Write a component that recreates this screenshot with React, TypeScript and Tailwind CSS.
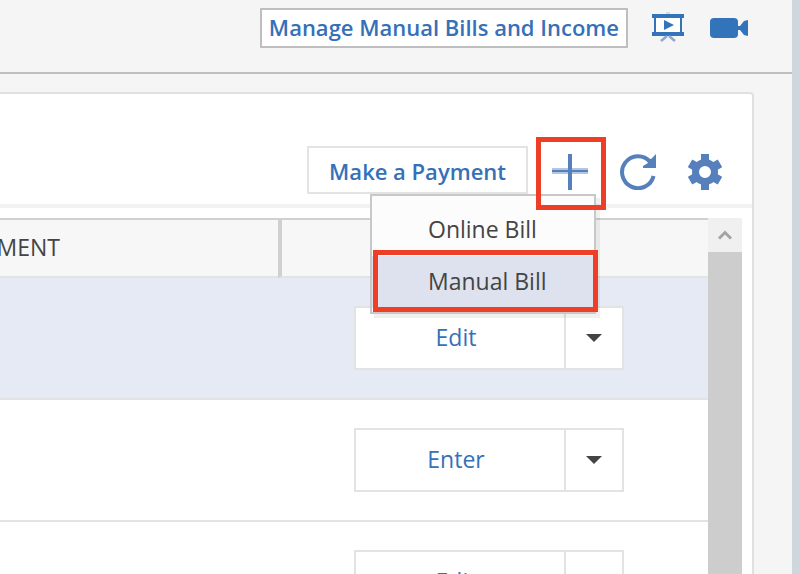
import React from "react";

interface BillRow {
    id: number;
    action: string;
    selected: boolean;
}

const rows: BillRow[] = [
    { id: 1, action: "Edit", selected: true },
    { id: 2, action: "Enter", selected: false },
    { id: 3, action: "Edit", selected: false },
];

function PresentationIcon() {
    return (
        <svg width="32" height="30" viewBox="0 0 32 30" aria-hidden="true">
            <rect x="14" y="0" width="4" height="2" fill="#d5dbe6" />
            <rect x="2" y="4" width="28" height="16" fill="#fff" />
            <path
                d="M0 2h32v4h-2v14h2v4H0v-4h2V6H0zM4 6v14h24V6z"
                fill="#3373ba"
                fillRule="evenodd"
            />
            <path d="M12 8l10 5-10 5z" fill="#3373ba" />
            <path
                d="M15 24l-6 5M17 24l6 5"
                stroke="#8fa6d0"
                strokeWidth="2.5"
                fill="none"
            />
        </svg>
    );
}

function VideoIcon() {
    return (
        <svg width="38" height="20" viewBox="0 0 38 20" aria-hidden="true">
            <rect width="28" height="20" rx="4" fill="#3373ba" />
            <path d="M27 8h3l4-5 4-1v16l-4-1-4-5h-3z" fill="#3373ba" />
        </svg>
    );
}

function PlusIcon() {
    return (
        <svg width="36" height="36" viewBox="0 0 36 36" aria-hidden="true">
            <rect y="14" width="36" height="6" fill="#b3c5e0" />
            <rect y="16" width="36" height="2" fill="#5580bb" />
            <rect x="16" width="4" height="36" fill="#5580bb" />
        </svg>
    );
}

function RefreshIcon() {
    return (
        <svg width="36" height="36" viewBox="0 0 36 36" aria-hidden="true">
            <path
                d="M33.6 22A16 16 0 1 1 30 7.500"
                stroke="#5580bb"
                strokeWidth="4"
                fill="none"
            />
            <path d="M36 0v14H23v-2l5-3-3-5 6 1z" fill="#5580bb" />
        </svg>
    );
}

function GearIcon() {
    return (
        <svg width="34" height="36" viewBox="0 0 34 36" aria-hidden="true">
            <g fill="none" stroke="#5580bb">
                <circle cx="17" cy="18" r="9.500" strokeWidth="7" />
                <path d="M17 0v10M17 26v10" strokeWidth="8" />
                <path
                    d="M2 9.300l8 4.600M24 22.100l8 4.600M2 26.700l8-4.600M24 13.900l8-4.600"
                    strokeWidth="9"
                />
            </g>
        </svg>
    );
}

function SplitButton({ label }: { label: string }) {
    return (
        <div className="flex h-16 border-2 border-[#e3e3e3] bg-white">
            <button
                type="button"
                className="flex-1 pr-2 pb-0.5 text-center text-[23px] text-[#3670b9]"
            >
                {label}
            </button>
            <button
                type="button"
                aria-label={`More options for ${label}`}
                className="flex w-[58px] items-center justify-center border-l-2 border-[#e3e3e3]"
            >
                <svg width="16" height="8" viewBox="0 0 16 8" aria-hidden="true">
                    <path d="M0 0h16L8 8z" fill="#444" />
                </svg>
            </button>
        </div>
    );
}

function AddBillMenu() {
    return (
        <div className="relative ml-2 w-[70px]">
            <button
                type="button"
                aria-label="Add bill"
                className="flex h-12 w-full items-center justify-center pt-1 pr-0.5"
            >
                <PlusIcon />
            </button>
            <ul className="absolute top-12 right-[10px] z-10 w-[226px] border-2 border-[#c8c8c8] bg-[#fcfcfc] pt-2 pb-1 text-[23px] text-[#444] shadow-[4px_4px_0_rgba(0,0,0,0.06)]">
                <li>
                    <button type="button" className="h-[52px] w-full pb-0.5 pl-14 text-left">
                        Online Bill
                    </button>
                </li>
                <li className="relative">
                    <button
                        type="button"
                        className="h-[52px] w-full bg-[#dde2ee] pb-0.5 pl-14 text-left"
                    >
                        Manual Bill
                    </button>
                    <span className="pointer-events-none absolute -top-1.5 -right-1 -bottom-1 left-px border-5 border-[#ee3e25]" />
                </li>
            </ul>
            <span className="pointer-events-none absolute inset-x-0 -top-[9px] -bottom-4 z-20 border-5 border-[#ee3e25]" />
        </div>
    );
}

export default function App() {
    return (
        <div className="flex h-screen overflow-hidden border-r-8 border-[#ced6de] bg-[#f5f5f5] font-['Open_Sans','Noto_Sans',sans-serif]">
            <div className="flex min-w-0 flex-1 flex-col">
                <header className="flex items-start justify-end border-b-2 border-[#bfbfbf] pt-2 pr-11 pb-6">
                    <button
                        type="button"
                        className="h-10 border-2 border-[#bfbfbf] bg-white px-[7px] pb-0.5 text-[22px] leading-8 font-semibold whitespace-nowrap text-[#3670b9]"
                    >
                        Manage Manual Bills and Income
                    </button>
                    <button type="button" aria-label="Tutorial" className="mt-1 ml-6">
                        <PresentationIcon />
                    </button>
                    <button type="button" aria-label="Video" className="mt-2.5 ml-[26px]">
                        <VideoIcon />
                    </button>
                </header>

                <main className="mt-[18px] mr-[38px] flex min-h-0 flex-1 flex-col rounded-tr border-t-2 border-r-2 border-[#e0e0e0] bg-white">
                    <div className="flex items-center justify-end border-b-4 border-[#f2f2f2] pt-[52px] pr-[30px] pb-2.5">
                        <button
                            type="button"
                            className="h-12 border-2 border-[#e3e3e3] bg-white px-5 pt-0.5 text-[22px] leading-8 font-semibold whitespace-nowrap text-[#3670b9]"
                        >
                            Make a Payment
                        </button>
                        <AddBillMenu />
                        <button type="button" aria-label="Refresh" className="ml-3.5 pt-1">
                            <RefreshIcon />
                        </button>
                        <button type="button" aria-label="Settings" className="ml-8 pt-1">
                            <GearIcon />
                        </button>
                    </div>

                    <div className="mt-2.5 mr-2.5 flex min-h-0 flex-1 overflow-hidden">
                        <div className="min-w-0 flex-1">
                            <table className="w-full table-fixed border-separate border-spacing-0">
                                <thead>
                                    <tr className="h-[60px] bg-[#f7f7f7]">
                                        <th className="border-t-2 border-b-2 border-t-[#d0d0d0] border-b-[#e3e3e3] p-0 pb-0.5 text-left text-[23px] font-normal text-[#444]">
                                            <span className="flex w-15 justify-end">
                                                MENT
                                            </span>
                                        </th>
                                        <th
                                            aria-label="Actions"
                                            className="w-[430px] border-t-2 border-b-2 border-l-4 border-t-[#d0d0d0] border-b-[#e3e3e3] border-l-[#d0d0d0] p-0"
                                        />
                                    </tr>
                                </thead>
                                <tbody>
                                    {rows.map((row) => (
                                        <tr
                                            key={row.id}
                                            className={row.selected ? "bg-[#e6eaf4]" : "bg-white"}
                                        >
                                            <td className="border-b-2 border-[#e3e3e3]" />
                                            <td className="border-b-2 border-[#e3e3e3] py-7 pr-[84px] pl-[76px]">
                                                <SplitButton label={row.action} />
                                            </td>
                                        </tr>
                                    ))}
                                </tbody>
                            </table>
                        </div>

                        {/* Scrollbar */}
                        <div className="flex w-[34px] flex-col bg-[#cdcdcd]">
                            <button
                                type="button"
                                aria-label="Scroll up"
                                className="flex h-[34px] items-center justify-center bg-[#f0f0f0]"
                            >
                                <svg width="14" height="10" viewBox="0 0 14 10" aria-hidden="true">
                                    <path
                                        d="M1 8.500l6-6 6 6"
                                        stroke="#a3a3a3"
                                        strokeWidth="3"
                                        fill="none"
                                    />
                                </svg>
                            </button>
                        </div>
                    </div>
                </main>
            </div>
        </div>
    );
}
